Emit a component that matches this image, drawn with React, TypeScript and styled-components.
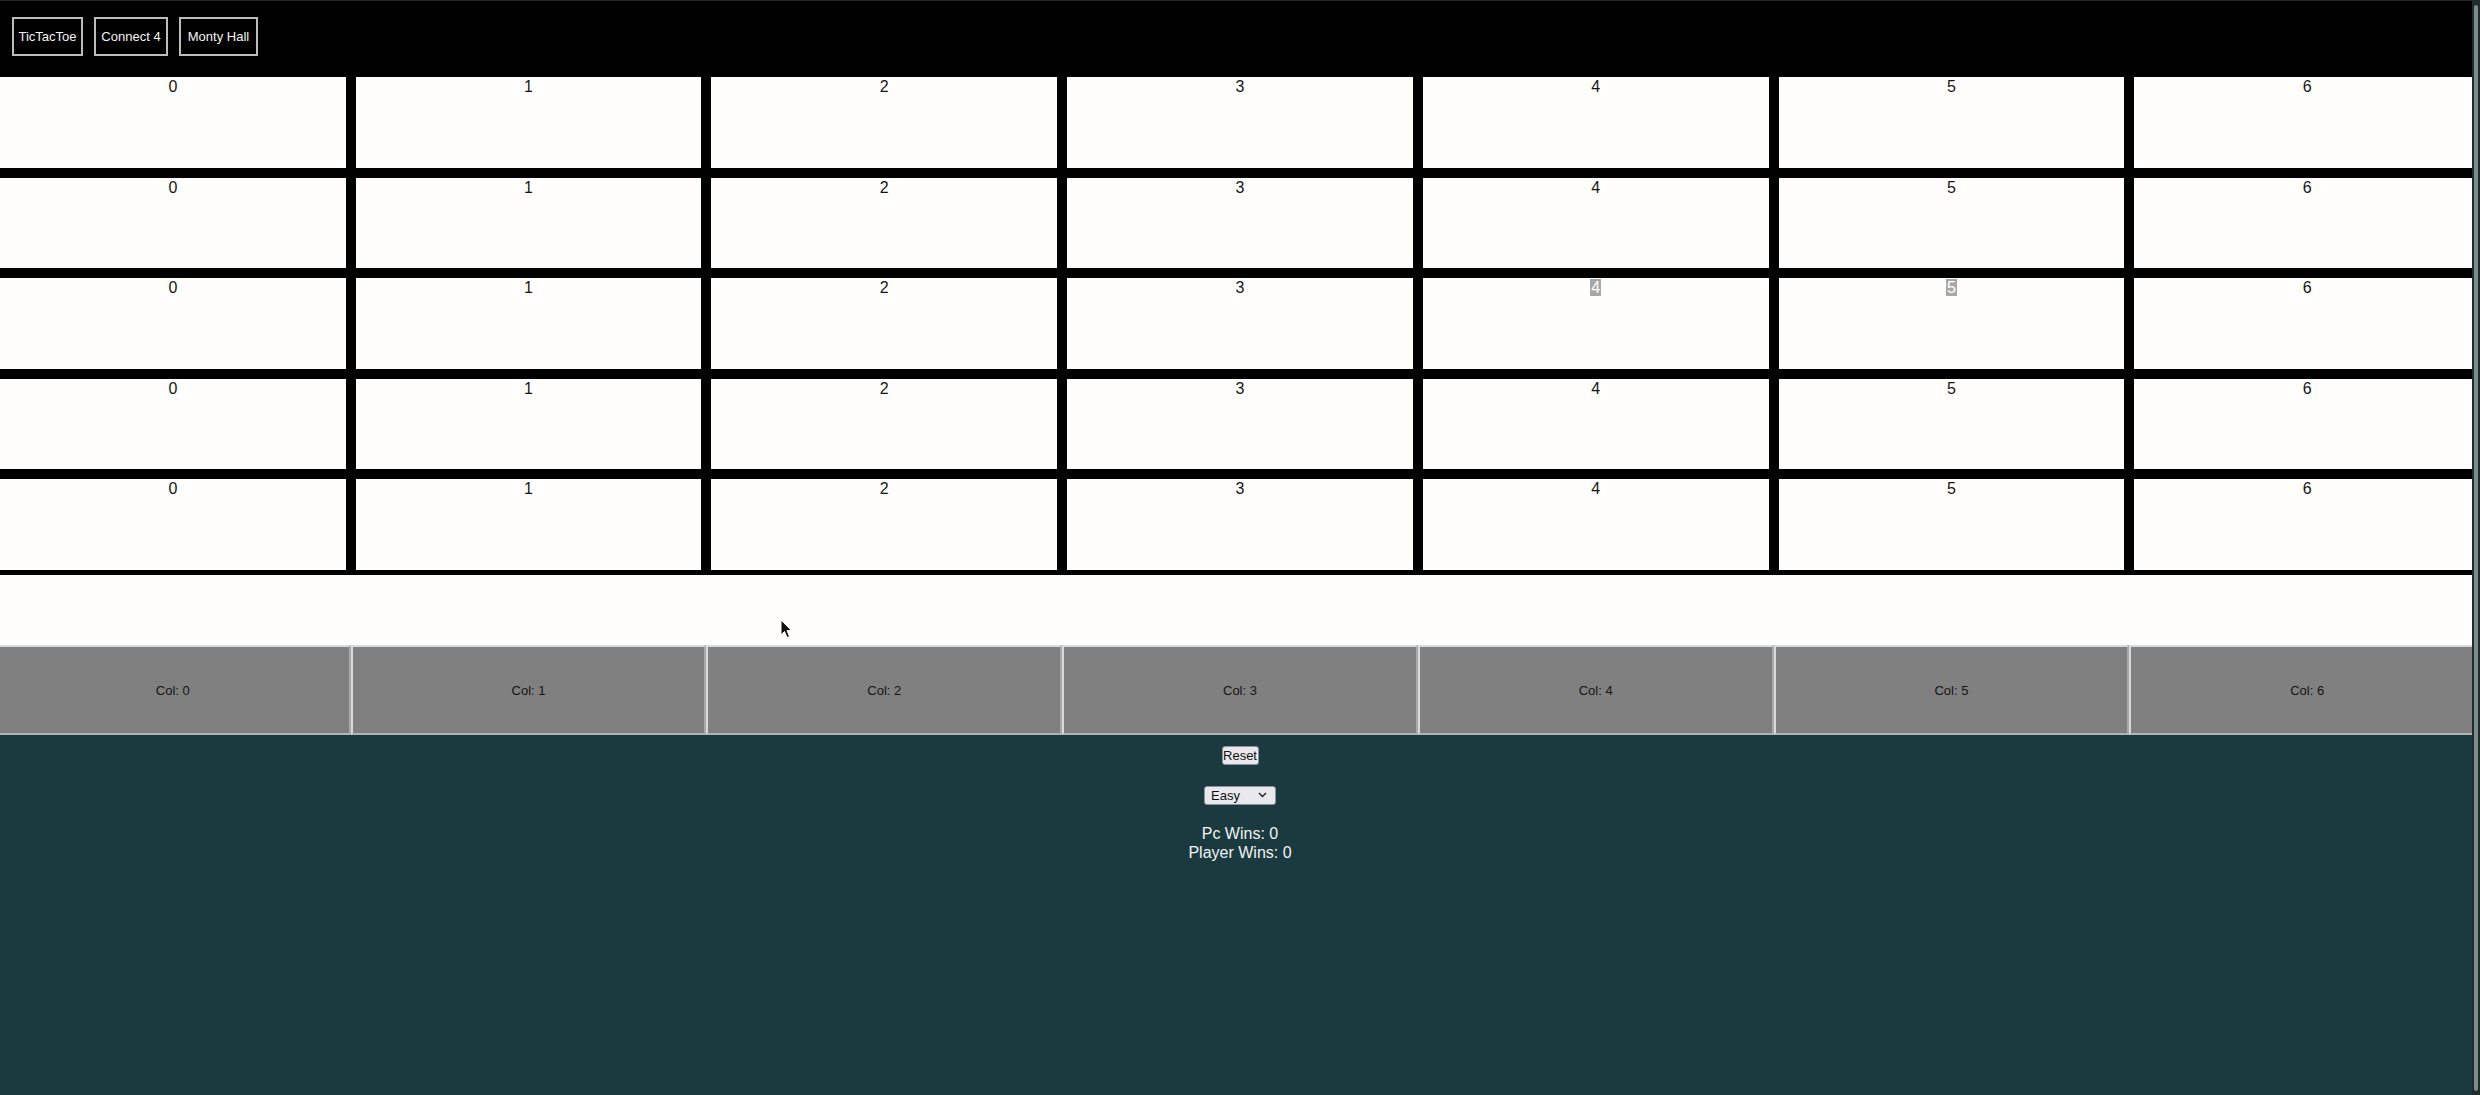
import React from "react";
import styled, { createGlobalStyle } from "styled-components";

const GlobalStyle = createGlobalStyle`
  html, body {
    margin: 0;
    padding: 0;
    background: #1a3a40;
    overflow: hidden;
    font-family: "Liberation Sans", Arial, sans-serif;
  }
  * { box-sizing: border-box; }
`;

const Page = styled.div`
  position: relative;
  width: 2480px;
  min-height: 1095px;
  background: #1a3a40;
  overflow: hidden;
`;

const NavBar = styled.nav`
  height: 77px;
  background: #000;
  border-top: 1px solid #262626;
  display: flex;
  align-items: flex-start;
  gap: 11px;
  padding: 16px 0 0 12px;
`;

const NavButton = styled.button<{ $w: number }>`
  width: ${(p) => p.$w}px;
  height: 39px;
  padding: 0;
  background: #000;
  color: #f4f4f4;
  border: 2px solid #bdbdbd;
  font-family: "Liberation Sans", Arial, sans-serif;
  font-size: 13px;
  text-align: center;
  cursor: pointer;
`;

const Board = styled.div`
  background: #000;
  padding-bottom: 5px;
  display: flex;
  flex-direction: column;
  gap: 10px;
`;

const BoardRow = styled.div`
  display: grid;
  grid-template-columns: repeat(7, 1fr);
  column-gap: 10px;
`;

const Cell = styled.div`
  height: 90.5px;
  background: #fffefd;
  color: #151515;
  font-size: 16px;
  line-height: 19px;
  text-align: center;
`;

const Digit = styled.span<{ $selected?: boolean }>`
  background: ${(p) => (p.$selected ? "#a7a7a7" : "transparent")};
  color: ${(p) => (p.$selected ? "#ffffff" : "inherit")};
  padding: 0 1px;
`;

const WhiteGap = styled.div`
  height: 70.5px;
  background: #fffefd;
`;

const ColumnBar = styled.div`
  display: grid;
  grid-template-columns: repeat(7, 1fr);
  width: 2490px;
  margin-left: -5px;
  height: 90px;
`;

const ColumnButton = styled.button`
  background: #808080;
  color: #141414;
  border-style: solid;
  border-width: 2px;
  border-color: #dadada #a9a9a9 #b4b4b4 #dadada;
  font-family: "Liberation Sans", Arial, sans-serif;
  font-size: 13px;
  padding: 0;
  cursor: pointer;
`;

const Controls = styled.div`
  display: flex;
  flex-direction: column;
  align-items: center;
  padding-top: 11px;
  color: #f2f2f2;
`;

const ResetButton = styled.button`
  width: 37px;
  height: 19px;
  padding: 0;
  background: #e9e9ed;
  color: #111;
  border: 1px solid #8f8f9d;
  border-radius: 3px;
  font-family: "Liberation Sans", Arial, sans-serif;
  font-size: 13px;
  line-height: 15px;
`;

const SelectWrap = styled.div`
  position: relative;
  margin-top: 21px;
  width: 72px;
  height: 19px;
`;

const Select = styled.select`
  appearance: none;
  width: 72px;
  height: 19px;
  padding: 0 0 0 6px;
  background: #e9e9ed;
  color: #111;
  border: 1px solid #8f8f9d;
  border-radius: 3px;
  font-family: "Liberation Sans", Arial, sans-serif;
  font-size: 13px;
  line-height: 17px;
`;

const Chevron = styled.svg`
  position: absolute;
  right: 9px;
  top: 6px;
  pointer-events: none;
`;

const Stats = styled.div`
  margin-top: 19px;
  font-size: 16px;
  line-height: 19px;
  text-align: center;
`;

const Cursor = styled.svg`
  position: absolute;
  left: 780px;
  top: 619px;
`;

const ScrollTrack = styled.div`
  position: fixed;
  top: 0;
  right: 0;
  width: 8px;
  height: 100%;
  background: #1f2b2d;
`;

const ScrollThumb = styled.div`
  position: absolute;
  top: 5px;
  bottom: 4px;
  left: 2px;
  width: 4px;
  border-radius: 2px;
  background: #7b8a8a;
`;

const cols = [0, 1, 2, 3, 4, 5, 6];
const rows = [0, 1, 2, 3, 4];

export default function App() {
  return (
    <>
      <GlobalStyle />
      <Page>
        <NavBar>
          <NavButton $w={71}>TicTacToe</NavButton>
          <NavButton $w={74}>Connect 4</NavButton>
          <NavButton $w={79}>Monty Hall</NavButton>
        </NavBar>
        <Board>
          {rows.map((r) => (
            <BoardRow key={r}>
              {cols.map((c) => (
                <Cell key={c}>
                  <Digit $selected={r === 2 && (c === 4 || c === 5)}>{c}</Digit>
                </Cell>
              ))}
            </BoardRow>
          ))}
        </Board>
        <WhiteGap />
        <ColumnBar>
          {cols.map((c) => (
            <ColumnButton key={c}>Col: {c}</ColumnButton>
          ))}
        </ColumnBar>
        <Controls>
          <ResetButton>Reset</ResetButton>
          <SelectWrap>
            <Select defaultValue="easy">
              <option value="easy">Easy</option>
              <option value="medium">Medium</option>
              <option value="hard">Hard</option>
            </Select>
            <Chevron width="9" height="6" viewBox="0 0 9 6">
              <path d="M1 1 L4.5 4.5 L8 1" fill="none" stroke="#222" strokeWidth="1.4" />
            </Chevron>
          </SelectWrap>
          <Stats>
            <div>Pc Wins: 0</div>
            <div>Player Wins: 0</div>
          </Stats>
        </Controls>
        <Cursor width="13" height="20" viewBox="0 0 13 20">
          <path d="M1 1 L1 16 L4.5 12.5 L7 18.5 L9.5 17.5 L7 11.5 L11.5 11.5 Z" fill="#111" stroke="#fff" strokeWidth="1" />
        </Cursor>
      </Page>
      <ScrollTrack>
        <ScrollThumb />
      </ScrollTrack>
    </>
  );
}
